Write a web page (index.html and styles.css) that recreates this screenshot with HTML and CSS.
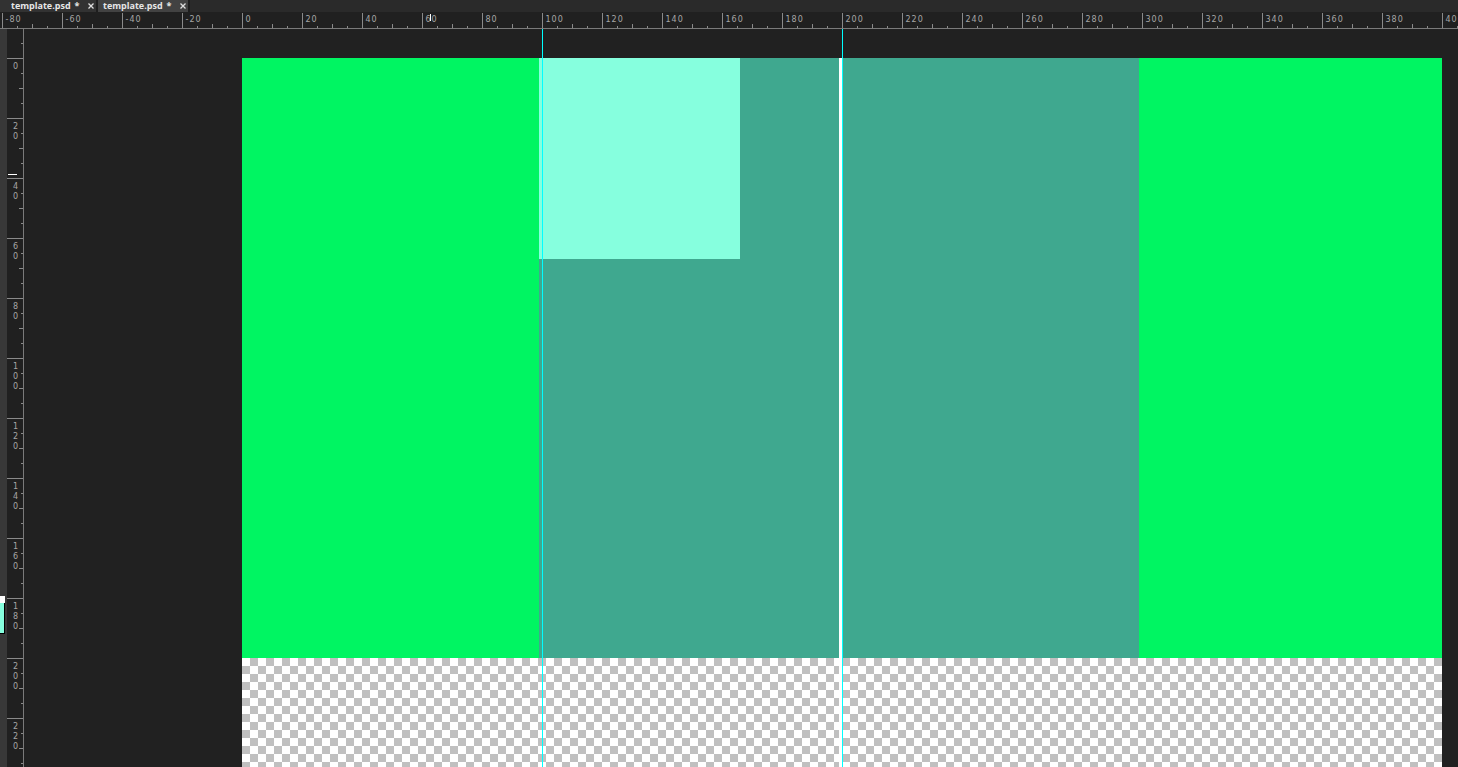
FILE: index.html
```html
<!DOCTYPE html>
<html>
<head>
<meta charset="utf-8">
<title>template.psd</title>
<link rel="stylesheet" href="styles.css">
</head>
<body>
<div class="app">
  <div class="tabs">
    <div class="tab tab-first"><span class="name">template.psd</span><span class="star">*</span><svg class="close" width="6" height="6" viewBox="0 0 6 6"><path d="M0.5 0.5 L5.5 5.5 M5.5 0.5 L0.5 5.5"/></svg></div>
    <div class="tab tab-second"><span class="name">template.psd</span><span class="star">*</span><svg class="close" width="6" height="6" viewBox="0 0 6 6"><path d="M0.5 0.5 L5.5 5.5 M5.5 0.5 L0.5 5.5"/></svg></div>
    <div class="tabs-fill"></div>
  </div>
  <div class="ruler-row">
    <svg class="hruler" width="1458" height="16" viewBox="0 0 1458 16">
      <defs>
        <pattern id="hticks" x="2" y="0" width="60" height="16" patternUnits="userSpaceOnUse">
          <rect x="0" y="1" width="1" height="15" class="tick"/>
          <rect x="15" y="14" width="1" height="2" class="tick"/>
          <rect x="30" y="12" width="1" height="4" class="tick"/>
          <rect x="45" y="14" width="1" height="2" class="tick"/>
        </pattern>
      </defs>
      <rect x="0" y="0" width="1458" height="16" fill="url(#hticks)"/>
      <g class="rlabel">
        <text x="5.5" y="9.5">-80</text>
        <text x="65.5" y="9.5">-60</text>
        <text x="125.5" y="9.5">-40</text>
        <text x="185.5" y="9.5">-20</text>
        <text x="245.5" y="9.5">0</text>
        <text x="305.5" y="9.5">20</text>
        <text x="365.5" y="9.5">40</text>
        <text x="425.5" y="9.5">60</text>
        <text x="485.5" y="9.5">80</text>
        <text x="545.5" y="9.5">100</text>
        <text x="605.5" y="9.5">120</text>
        <text x="665.5" y="9.5">140</text>
        <text x="725.5" y="9.5">160</text>
        <text x="785.5" y="9.5">180</text>
        <text x="845.5" y="9.5">200</text>
        <text x="905.5" y="9.5">220</text>
        <text x="965.5" y="9.5">240</text>
        <text x="1025.5" y="9.5">260</text>
        <text x="1085.5" y="9.5">280</text>
        <text x="1145.5" y="9.5">300</text>
        <text x="1205.5" y="9.5">320</text>
        <text x="1265.5" y="9.5">340</text>
        <text x="1325.5" y="9.5">360</text>
        <text x="1385.5" y="9.5">380</text>
        <text x="1445.5" y="9.5">400</text>
      </g>
      <rect x="430" y="2" width="1" height="7" class="marker"/>
    </svg>
  </div>
  <div class="main">
    <div class="strip">
      <div class="swatch-fg"></div>
      <div class="swatch-bg"></div>
    </div>
    <div class="vruler-box">
      <svg class="vruler" width="16" height="738" viewBox="0 0 16 738">
        <defs>
          <pattern id="vticks" x="0" y="29" width="16" height="60" patternUnits="userSpaceOnUse">
            <rect x="0" y="0" width="16" height="1" class="tick"/>
            <rect x="14" y="15" width="2" height="1" class="tick"/>
            <rect x="12" y="30" width="4" height="1" class="tick"/>
            <rect x="14" y="45" width="2" height="1" class="tick"/>
          </pattern>
        </defs>
        <rect x="0" y="0" width="16" height="738" fill="url(#vticks)"/>
        <g class="rlabel vlabel">
          <text><tspan x="6" y="40">0</tspan></text>
          <text><tspan x="6" y="100">2</tspan><tspan x="6" y="110">0</tspan></text>
          <text><tspan x="6" y="160">4</tspan><tspan x="6" y="170">0</tspan></text>
          <text><tspan x="6" y="220">6</tspan><tspan x="6" y="230">0</tspan></text>
          <text><tspan x="6" y="280">8</tspan><tspan x="6" y="290">0</tspan></text>
          <text><tspan x="6" y="340">1</tspan><tspan x="6" y="350">0</tspan><tspan x="6" y="360">0</tspan></text>
          <text><tspan x="6" y="400">1</tspan><tspan x="6" y="410">2</tspan><tspan x="6" y="420">0</tspan></text>
          <text><tspan x="6" y="460">1</tspan><tspan x="6" y="470">4</tspan><tspan x="6" y="480">0</tspan></text>
          <text><tspan x="6" y="520">1</tspan><tspan x="6" y="530">6</tspan><tspan x="6" y="540">0</tspan></text>
          <text><tspan x="6" y="580">1</tspan><tspan x="6" y="590">8</tspan><tspan x="6" y="600">0</tspan></text>
          <text><tspan x="6" y="640">2</tspan><tspan x="6" y="650">0</tspan><tspan x="6" y="660">0</tspan></text>
          <text><tspan x="6" y="700">2</tspan><tspan x="6" y="710">2</tspan><tspan x="6" y="720">0</tspan></text>
        </g>
        <rect x="1" y="145" width="9" height="1" class="marker"/>
      </svg>
    </div>
    <div class="pasteboard">
      <div class="canvas">
        <div class="art">
          <div class="fill-green fill-left"></div>
          <div class="fill-teal">
            <div class="fill-mint"></div>
          </div>
          <div class="fill-green fill-right"></div>
        </div>
        <div class="transparent"></div>
      </div>
      <div class="guide-edge"></div>
      <div class="guide guide-a"></div>
      <div class="guide guide-b"></div>
    </div>
  </div>
</div>
</body>
</html>
```
FILE: styles.css
```css
* {
  box-sizing: border-box;
}

html,
body {
  margin: 0;
  padding: 0;
  height: 100%;
}

body {
  background: #212121;
  overflow: hidden;
  font-family: "Open Sans", "Liberation Sans", sans-serif;
}

.app {
  display: flex;
  flex-direction: column;
  height: 767px;
}

/* tabs */
.tabs {
  display: flex;
  gap: 2px;
  height: 12px;
  background: #1e1e1e;
}

.tab {
  display: flex;
  align-items: center;
  flex-shrink: 0;
  height: 12px;
  font-size: 9px;
  font-weight: 700;
  line-height: 12px;
  color: #e6e6e6;
  white-space: nowrap;
  overflow: hidden;
}

.tab-first {
  width: 96px;
  padding-left: 11px;
  background: #323232;
}

.tab-second {
  width: 90px;
  padding-left: 5px;
  background: #424242;
}

.tabs-fill {
  flex: 1;
  background: #2a2a2a;
}

.name {
  flex-shrink: 0;
}

.star {
  flex-shrink: 0;
  margin-left: 4px;
  font-size: 9px;
}

.close {
  display: block;
  flex-shrink: 0;
  margin-left: 8px;
  stroke: #dedede;
  stroke-width: 1.3;
  fill: none;
}

/* rulers */
.ruler-row {
  height: 17px;
  background: #202020;
  border-bottom: 1px solid #7a7a7a;
}

.hruler,
.vruler {
  display: block;
}

.tick {
  fill: #8a8a8a;
}

.marker {
  fill: #ffffff;
}

.rlabel {
  font-family: "DejaVu Sans", "Liberation Sans", sans-serif;
  font-size: 8px;
  letter-spacing: 1px;
  fill: #a6a6a6;
}

.vlabel {
  letter-spacing: 0;
}

.main {
  flex: 1;
  display: flex;
  min-height: 0;
}

.strip {
  position: relative;
  width: 7px;
  background: #383838;
}

.swatch-fg {
  position: absolute;
  left: 0;
  top: 567px;
  width: 5px;
  height: 7px;
  background: #ffffff;
}

.swatch-bg {
  position: absolute;
  left: 0;
  top: 574px;
  width: 5px;
  height: 31px;
  background: #86ffde;
  border-right: 1px solid #000000;
  border-bottom: 1px solid #000000;
}

.vruler-box {
  width: 17px;
  background: #202020;
  border-right: 1px solid #7a7a7a;
}

/* canvas */
.pasteboard {
  position: relative;
  flex: 1;
  overflow: hidden;
  padding: 29px 0 0 218px;
  background: #212121;
}

.canvas {
  width: 1200px;
}

.art {
  display: flex;
  height: 600px;
}

.fill-green {
  background: #00f562;
}

.fill-left {
  width: 297px;
}

.fill-right {
  flex: 1;
}

.fill-teal {
  width: 600px;
  background: #3fa88f;
}

.fill-mint {
  width: 201px;
  height: 201px;
  background: #86ffde;
}

.transparent {
  height: 200px;
  background: repeating-conic-gradient(#c0c0c0 0 25%, #ffffff 0 50%) 0 0 / 16px 16px;
}

.guide {
  position: absolute;
  top: 0;
  bottom: 0;
  width: 1px;
  background: #00ffff;
}

.guide-a {
  left: 518px;
}

.guide-b {
  left: 818px;
}

.guide-edge {
  position: absolute;
  top: 29px;
  bottom: 0;
  left: 815px;
  width: 3px;
  background: #ffffff;
}
```
